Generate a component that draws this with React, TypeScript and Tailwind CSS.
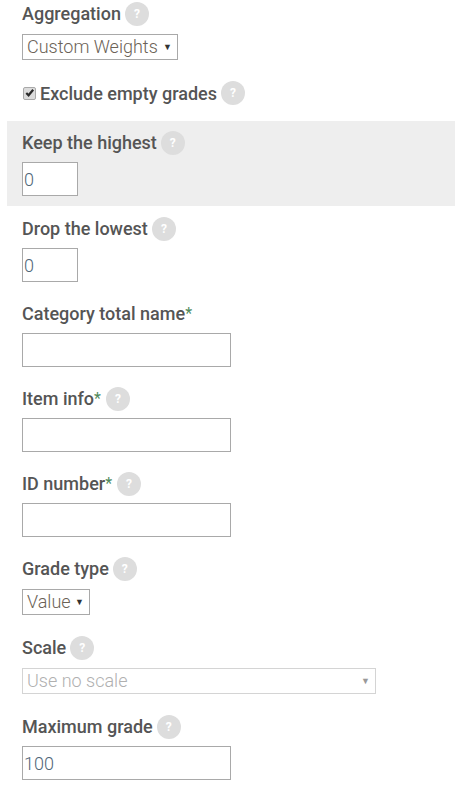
import type { ReactNode } from "react";

function Help() {
  return (
    <span className="ml-1 flex h-6 w-6 shrink-0 items-center justify-center rounded-full bg-[#dddddd] text-[12px] font-bold leading-none text-white">
      ?
    </span>
  );
}

function Label({ children, help = true }: { children: ReactNode; help?: boolean }) {
  return (
    <div className="flex h-6 items-center text-[18px] font-medium leading-6 text-[#555555]">
      <span>{children}</span>
      {help && <Help />}
    </div>
  );
}

function Req() {
  return <span className="mr-[1px] align-[1px] text-[16px] font-normal leading-none text-[#4f8a5b]">*</span>;
}

const inputClass =
  "mt-[7px] block h-[34px] border border-[#a9a9a9] bg-white px-[1px] text-[18px] font-light text-[#4f6678] outline-none";

function Field({ label, help, value = "", width = "w-[209px]" }: { label: ReactNode; help?: boolean; value?: string; width?: string }) {
  return (
    <div className="pt-[1px]">
      <Label help={help}>{label}</Label>
      <input readOnly value={value} className={`${inputClass} ${width}`} />
    </div>
  );
}

function Select({ value, width, disabled = false }: { value: string; width: string; disabled?: boolean }) {
  return (
    <div
      className={`mt-[8px] flex h-[26px] items-center justify-between border bg-white pl-[4px] pr-[5px] text-[18px] font-light leading-none ${width} ${
        disabled ? "border-[#d4d4d4] text-[#b0b0b0]" : "border-[#a9a9a9] text-[#6b6256]"
      }`}
    >
      <span>{value}</span>
      <span className={`text-[9px] ${disabled ? "text-[#999999]" : "text-[#333333]"}`}>▼</span>
    </div>
  );
}

function CheckMark() {
  return (
    <span className="ml-[1px] mr-1 flex h-[13px] w-[13px] shrink-0 items-center justify-center rounded-[2px] border border-[#a9a9a9] bg-[#dcdcdc]">
      <svg viewBox="0 0 12 12" className="h-[12px] w-[12px]" fill="none" stroke="#2b2b2b" strokeWidth="2.4">
        <path d="M2.5 6 L5 8.5 L10 2.5" />
      </svg>
    </span>
  );
}

export default function App() {
  return (
    <div className="h-[790px] w-[455px] overflow-hidden bg-white font-['Roboto',sans-serif]">
      <div className="pl-[22px] pt-[2px]">
        <Label>Aggregation</Label>
        <Select value="Custom Weights" width="w-[156px]" />
        <div className="mt-[21px] flex h-6 items-center text-[18px] font-medium text-[#555555]">
          <CheckMark />
          <span>Exclude empty grades</span>
          <Help />
        </div>
      </div>

      <div className="ml-[7px] mt-[16px] h-[85px] bg-[#eeeeee] pl-[15px] pt-[10px]">
        <Label>Keep the highest</Label>
        <input readOnly value="0" className={`${inputClass} w-[56px]`} />
      </div>

      <div className="flex flex-col gap-[19px] pl-[22px] pt-[10px]">
        <Field label="Drop the lowest" value="0" width="w-[56px]" />
        <Field label={<>Category total name<Req /></>} help={false} />
        <Field label={<>Item info<Req /></>} />
        <Field label={<>ID number<Req /></>} />
      </div>

      <div className="pl-[22px] pt-[20px]">
        <Label>Grade type</Label>
        <Select value="Value" width="w-[68px]" />
        <div className="mt-[21px]">
          <Label>Scale</Label>
          <Select value="Use no scale" width="w-[354px]" disabled />
        </div>
        <div className="mt-[21px]">
          <Label>Maximum grade</Label>
          <input readOnly value="100" className={`${inputClass} w-[209px]`} />
        </div>
      </div>
    </div>
  );
}
